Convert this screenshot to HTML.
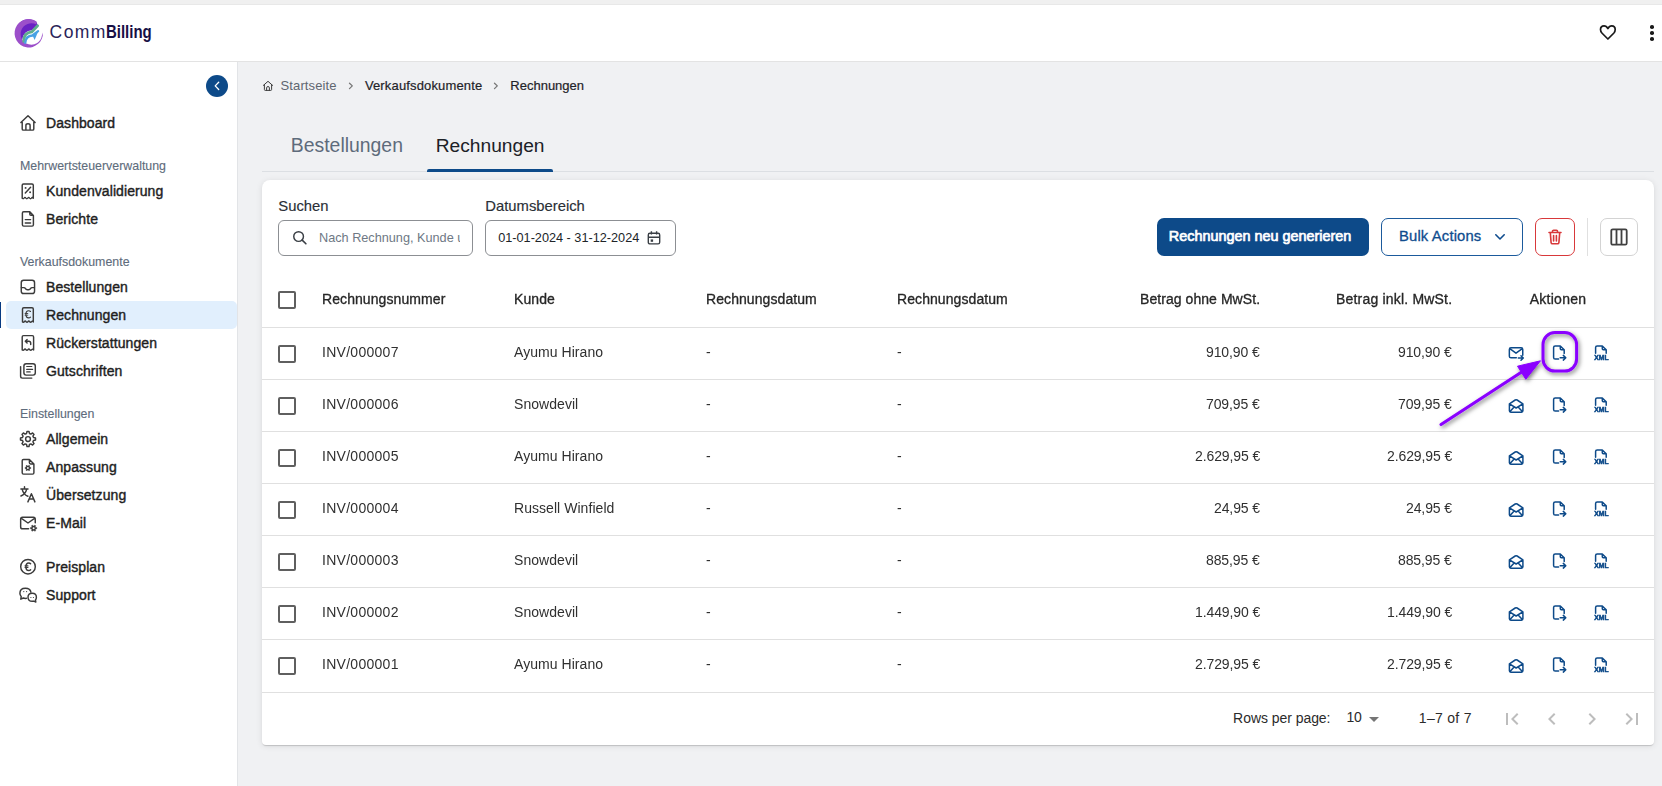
<!DOCTYPE html>
<html><head><meta charset="utf-8"><style>
html,body{margin:0;padding:0;}
body{width:1662px;height:786px;position:relative;overflow:hidden;background:#f0f1f3;font-family:"Liberation Sans", sans-serif;}
.t{position:absolute;white-space:nowrap;}
svg{overflow:visible;}
</style></head><body>
<div style="position:absolute;left:0px;top:0px;width:1662px;height:4px;background:#f0f0f0;"></div>
<div style="position:absolute;left:0px;top:4px;width:1662px;height:1px;background:#e8e8e8;"></div>
<div style="position:absolute;left:0px;top:5px;width:1662px;height:56px;background:#fff;"></div>
<div style="position:absolute;left:0px;top:61px;width:1662px;height:1px;background:#e3e3e3;"></div>
<div style="position:absolute;left:0px;top:62px;width:237px;height:724px;background:#fff;"></div>
<div style="position:absolute;left:237px;top:62px;width:1px;height:724px;background:#e2e4e7;"></div>
<svg style="position:absolute;left:12.3px;top:17.7px;" width="34" height="32" viewBox="0 0 34 32">
<path d="M 6.5 21 A 12.3 12.3 0 0 1 24.7 4.6 L 25.8 7.2 L 19.8 12.3 Q 11.8 12.6 10.3 21.5 Z" fill="#6a22c4"/>
<path d="M 24.6 3.4 A 14.2 14.2 0 1 0 30.95 14.6 L 29.9 17.6 A 10.7 10.7 0 1 1 24.4 6.6 Z" fill="#9c4fca"/>
<path d="M 11.7 23.4 Q 11.7 14.6 19.8 13.9 L 25.6 7.8" stroke="#5fae8e" stroke-width="2.8" fill="none" stroke-linecap="round"/>
<path d="M 13.3 24.8 Q 13.7 17.8 20.4 17.5 L 26.1 13.2" stroke="#48a2e4" stroke-width="2.3" fill="none" stroke-linecap="round"/>
<path d="M 26.6 12.4 L 22.6 22 L 20.6 17.4 Z" fill="#48a2e4"/>
</svg>
<div class="t" style="font-size:17.5px;line-height:17.5px;color:#2a2358;font-weight:normal;top:24.49px;letter-spacing:1.4px;left:49.6px;">Comm</div>
<div class="t" style="font-size:17.5px;line-height:17.5px;color:#170f45;font-weight:bold;top:24.49px;left:106.2px;"><span style="display:inline-block;transform:scaleX(0.855);transform-origin:0 0;">Billing</span></div>
<svg style="position:absolute;left:0;top:0;" width="1662" height="62" viewBox="0 0 1662 62"><path d="M 1607.9 39 L 1601.9 33 Q 1600.5 31.6 1600.5 29.6 Q 1600.5 25.8 1604.1 25.8 Q 1606.4 25.8 1607.9 28.6 Q 1609.4 25.8 1611.7 25.8 Q 1615.2 25.8 1615.2 29.6 Q 1615.2 31.6 1613.9 33 Z" stroke="#1a1a1a" stroke-width="1.7" fill="none" stroke-linejoin="round"/></svg>
<div style="position:absolute;left:1650.2px;top:25.4px;width:3.6px;height:3.6px;border-radius:50%;background:#1a1a1a"></div>
<div style="position:absolute;left:1650.2px;top:31.099999999999998px;width:3.6px;height:3.6px;border-radius:50%;background:#1a1a1a"></div>
<div style="position:absolute;left:1650.2px;top:37.0px;width:3.6px;height:3.6px;border-radius:50%;background:#1a1a1a"></div>
<div style="position:absolute;left:206px;top:75px;width:22px;height:22px;border-radius:50%;background:#0d4a89"></div>
<svg style="position:absolute;left:213px;top:80px;" width="8" height="12" viewBox="0 0 8 12"><path d="M5.7 2.3 L2.2 5.9 L5.7 9.5" stroke="#fff" stroke-width="1.35" fill="none" stroke-linecap="round" stroke-linejoin="round"/></svg>
<div style="position:absolute;left:6px;top:301px;width:230.5px;height:28px;border-radius:5px;background:#e1effd"></div>
<div style="position:absolute;left:0px;top:302px;width:1px;height:26px;background:#083a82;"></div>
<div class="t" style="font-size:14px;line-height:14px;color:#1e1e1e;font-weight:normal;top:116.15px;-webkit-text-stroke:0.4px #1e1e1e;letter-spacing:0.08px;left:46px;">Dashboard</div>
<div class="t" style="font-size:14px;line-height:14px;color:#1e1e1e;font-weight:normal;top:184.15px;-webkit-text-stroke:0.4px #1e1e1e;letter-spacing:0.08px;left:46px;">Kundenvalidierung</div>
<div class="t" style="font-size:14px;line-height:14px;color:#1e1e1e;font-weight:normal;top:212.15px;-webkit-text-stroke:0.4px #1e1e1e;letter-spacing:0.08px;left:46px;">Berichte</div>
<div class="t" style="font-size:14px;line-height:14px;color:#1e1e1e;font-weight:normal;top:279.65px;-webkit-text-stroke:0.4px #1e1e1e;letter-spacing:0.08px;left:46px;">Bestellungen</div>
<div class="t" style="font-size:14px;line-height:14px;color:#1e1e1e;font-weight:normal;top:307.65px;-webkit-text-stroke:0.4px #1e1e1e;letter-spacing:0.08px;left:46px;">Rechnungen</div>
<div class="t" style="font-size:14px;line-height:14px;color:#1e1e1e;font-weight:normal;top:335.65px;-webkit-text-stroke:0.4px #1e1e1e;letter-spacing:0.08px;left:46px;">Rückerstattungen</div>
<div class="t" style="font-size:14px;line-height:14px;color:#1e1e1e;font-weight:normal;top:363.65px;-webkit-text-stroke:0.4px #1e1e1e;letter-spacing:0.08px;left:46px;">Gutschriften</div>
<div class="t" style="font-size:14px;line-height:14px;color:#1e1e1e;font-weight:normal;top:431.85px;-webkit-text-stroke:0.4px #1e1e1e;letter-spacing:0.08px;left:46px;">Allgemein</div>
<div class="t" style="font-size:14px;line-height:14px;color:#1e1e1e;font-weight:normal;top:459.85px;-webkit-text-stroke:0.4px #1e1e1e;letter-spacing:0.08px;left:46px;">Anpassung</div>
<div class="t" style="font-size:14px;line-height:14px;color:#1e1e1e;font-weight:normal;top:487.85px;-webkit-text-stroke:0.4px #1e1e1e;letter-spacing:0.08px;left:46px;">Übersetzung</div>
<div class="t" style="font-size:14px;line-height:14px;color:#1e1e1e;font-weight:normal;top:515.85px;-webkit-text-stroke:0.4px #1e1e1e;letter-spacing:0.08px;left:46px;">E-Mail</div>
<div class="t" style="font-size:14px;line-height:14px;color:#1e1e1e;font-weight:normal;top:559.85px;-webkit-text-stroke:0.4px #1e1e1e;letter-spacing:0.08px;left:46px;">Preisplan</div>
<div class="t" style="font-size:14px;line-height:14px;color:#1e1e1e;font-weight:normal;top:587.85px;-webkit-text-stroke:0.4px #1e1e1e;letter-spacing:0.08px;left:46px;">Support</div>
<div class="t" style="font-size:12.4px;line-height:12.4px;color:#5e6c7c;font-weight:normal;top:159.50px;-webkit-text-stroke:0.12px #5e6c7c;left:20px;">Mehrwertsteuerverwaltung</div>
<div class="t" style="font-size:12.4px;line-height:12.4px;color:#5e6c7c;font-weight:normal;top:256.00px;-webkit-text-stroke:0.12px #5e6c7c;left:20px;">Verkaufsdokumente</div>
<div class="t" style="font-size:12.4px;line-height:12.4px;color:#5e6c7c;font-weight:normal;top:407.50px;-webkit-text-stroke:0.12px #5e6c7c;left:20px;">Einstellungen</div>
<div class="t" style="font-size:13px;line-height:13px;color:#5f6670;font-weight:normal;top:79.00px;letter-spacing:0.1px;left:280.6px;">Startseite</div>
<div class="t" style="font-size:13px;line-height:13px;color:#1f2328;font-weight:normal;top:79.00px;-webkit-text-stroke:0.2px #1f2328;letter-spacing:0.15px;left:364.9px;">Verkaufsdokumente</div>
<div class="t" style="font-size:13px;line-height:13px;color:#1f2328;font-weight:normal;top:79.00px;-webkit-text-stroke:0.2px #1f2328;left:510.3px;">Rechnungen</div>
<div class="t" style="font-size:19.4px;line-height:19.4px;color:#5e6b7b;font-weight:normal;top:135.58px;left:290.8px;">Bestellungen</div>
<div class="t" style="font-size:19.2px;line-height:19.2px;color:#1c2127;font-weight:normal;top:135.75px;left:435.7px;">Rechnungen</div>
<div style="position:absolute;left:262px;top:171px;width:1392px;height:1px;background:#dcdfe3;"></div>
<div style="position:absolute;left:427px;top:168.6px;width:126px;height:3.200000000000017px;background:#0d4a89;border-radius:2px 2px 0 0;"></div>
<div style="position:absolute;left:262px;top:180px;width:1392px;height:565px;background:#fff;border-radius:8px 8px 4px 4px;box-shadow:0px 2px 1px -1px rgba(0,0,0,0.1),0px 1px 1px 0px rgba(0,0,0,0.06),0px 1px 6px 0px rgba(0,0,0,0.1);"></div>
<div class="t" style="font-size:14.8px;line-height:14.8px;color:#2a2f36;font-weight:normal;top:198.77px;-webkit-text-stroke:0.15px #2a2f36;left:278.3px;">Suchen</div>
<div class="t" style="font-size:14.8px;line-height:14.8px;color:#2a2f36;font-weight:normal;top:198.77px;-webkit-text-stroke:0.15px #2a2f36;left:485.3px;">Datumsbereich</div>
<div style="position:absolute;left:278px;top:220px;width:193px;height:34px;border:1px solid #8c8f93;border-radius:6px;"></div>
<div style="position:absolute;left:485px;top:220px;width:189px;height:34px;border:1px solid #8c8f93;border-radius:6px;"></div>
<svg style="position:absolute;left:292px;top:230px;" width="15" height="15" viewBox="0 0 15 15"><circle cx="6.6" cy="6.5" r="4.85" stroke="#3a3f45" stroke-width="1.45" fill="none"/><path d="M10.2 10.1 L13.9 13.8" stroke="#3a3f45" stroke-width="1.6" stroke-linecap="round"/></svg>
<div style="position:absolute;left:319px;top:228px;width:140.7px;height:20px;overflow:hidden;"><div class="t" style="left:0;top:3.70px;font-size:12.7px;line-height:13px;color:#6e7884;">Nach Rechnung, Kunde und mehr</div></div>
<div class="t" style="font-size:12.7px;line-height:12.7px;color:#202428;font-weight:normal;top:231.85px;left:498.2px;">01-01-2024 - 31-12-2024</div>
<svg style="position:absolute;left:647px;top:230px;" width="14" height="15" viewBox="0 0 14 15"><rect x="1.3" y="3.3" width="11.4" height="10.6" rx="1.6" stroke="#3a3f45" stroke-width="1.4" fill="none"/><path d="M1.3 7.3 H12.7 M4.4 1.2 V4.6 M9.6 1.2 V4.6" stroke="#3a3f45" stroke-width="1.4"/><rect x="3.7" y="9.4" width="2.4" height="2.4" fill="#3a3f45"/></svg>
<div style="position:absolute;left:1157px;top:218px;width:212px;height:38px;border-radius:7px;background:#0d4a89;"></div>
<div class="t" style="font-size:14.4px;line-height:14.4px;color:#fff;font-weight:normal;top:229.11px;-webkit-text-stroke:0.7px #fff;left:1168.8px;">Rechnungen neu generieren</div>
<div style="position:absolute;left:1381px;top:218px;width:140px;height:36px;border:1px solid #1b5a9c;border-radius:7px;"></div>
<div class="t" style="font-size:14.8px;line-height:14.8px;color:#0f4c8e;font-weight:normal;top:228.67px;-webkit-text-stroke:0.3px #0f4c8e;letter-spacing:0.15px;left:1399px;">Bulk Actions</div>
<svg style="position:absolute;left:1494px;top:233px;" width="12" height="8" viewBox="0 0 12 8"><path d="M1.8 1.8 L6 6 L10.2 1.8" stroke="#0f4c8e" stroke-width="1.6" fill="none" stroke-linecap="round" stroke-linejoin="round"/></svg>
<div style="position:absolute;left:1535px;top:218px;width:38px;height:36px;border:1px solid #d8383a;border-radius:7px;"></div>
<svg style="position:absolute;left:1547px;top:229px;" width="16" height="16" viewBox="0 0 16 16"><path d="M2 3.5 H14 M5.5 3.5 V2.2 C5.5 1.6 6 1.2 6.5 1.2 H9.5 C10 1.2 10.5 1.6 10.5 2.2 V3.5 M3.3 3.8 L4.1 13.6 C4.2 14.3 4.7 14.8 5.4 14.8 H10.6 C11.3 14.8 11.8 14.3 11.9 13.6 L12.7 3.8 M6.6 6.5 V12 M9.4 6.5 V12" stroke="#d8383a" stroke-width="1.6" fill="none" stroke-linecap="round" stroke-linejoin="round"/></svg>
<div style="position:absolute;left:1587px;top:218px;width:1px;height:38px;background:#e0e0e0;"></div>
<div style="position:absolute;left:1600px;top:218px;width:36px;height:36px;border:1px solid #d3d3d3;border-radius:7px;"></div>
<svg style="position:absolute;left:1610px;top:228px;" width="18" height="18" viewBox="0 0 18 18"><rect x="1.3" y="1.3" width="15.4" height="15.4" rx="1.5" stroke="#404040" stroke-width="1.8" fill="none"/><path d="M6.5 1.3 V16.7 M11.5 1.3 V16.7" stroke="#404040" stroke-width="1.8"/></svg>
<div style="position:absolute;left:278.2px;top:291.2px;width:13.5px;height:13.5px;border:2px solid #5f5f5f;border-radius:2px;"></div>
<div class="t" style="font-size:14px;line-height:14px;color:#262626;font-weight:normal;top:292.15px;-webkit-text-stroke:0.32px #262626;letter-spacing:0.08px;left:322.4px;will-change:transform;">Rechnungsnummer</div>
<div class="t" style="font-size:14px;line-height:14px;color:#262626;font-weight:normal;top:292.15px;-webkit-text-stroke:0.32px #262626;letter-spacing:0.08px;left:514px;will-change:transform;">Kunde</div>
<div class="t" style="font-size:14px;line-height:14px;color:#262626;font-weight:normal;top:292.15px;-webkit-text-stroke:0.32px #262626;letter-spacing:0.08px;left:706px;will-change:transform;">Rechnungsdatum</div>
<div class="t" style="font-size:14px;line-height:14px;color:#262626;font-weight:normal;top:292.15px;-webkit-text-stroke:0.32px #262626;letter-spacing:0.08px;left:897.2px;will-change:transform;">Rechnungsdatum</div>
<div class="t" style="font-size:14px;line-height:14px;color:#262626;font-weight:normal;top:292.15px;-webkit-text-stroke:0.32px #262626;letter-spacing:0.06px;right:402px;will-change:transform;">Betrag ohne MwSt.</div>
<div class="t" style="font-size:14px;line-height:14px;color:#262626;font-weight:normal;top:292.15px;-webkit-text-stroke:0.32px #262626;letter-spacing:0.19px;right:210px;will-change:transform;">Betrag inkl. MwSt.</div>
<div class="t" style="font-size:14px;line-height:14px;color:#262626;font-weight:normal;top:292.15px;-webkit-text-stroke:0.32px #262626;letter-spacing:0.26px;left:1258.3px;width:600px;text-align:center;will-change:transform;">Aktionen</div>
<div style="position:absolute;left:262px;top:327px;width:1392px;height:1px;background:#e0e0e0;"></div>
<div style="position:absolute;left:278.2px;top:345.1px;width:13.5px;height:13.5px;border:2px solid #5f5f5f;border-radius:2px;"></div>
<div class="t" style="font-size:14px;line-height:14px;color:#303030;font-weight:normal;top:344.85px;letter-spacing:0.28px;left:322.4px;will-change:transform;">INV/000007</div>
<div class="t" style="font-size:14px;line-height:14px;color:#303030;font-weight:normal;top:344.85px;letter-spacing:0.05px;left:514px;will-change:transform;">Ayumu Hirano</div>
<div class="t" style="font-size:14px;line-height:14px;color:#303030;font-weight:normal;top:344.85px;left:706px;will-change:transform;">-</div>
<div class="t" style="font-size:14px;line-height:14px;color:#303030;font-weight:normal;top:344.85px;left:897.2px;will-change:transform;">-</div>
<div class="t" style="font-size:14px;line-height:14px;color:#303030;font-weight:normal;top:344.85px;letter-spacing:-0.1px;right:402px;will-change:transform;">910,90 €</div>
<div class="t" style="font-size:14px;line-height:14px;color:#303030;font-weight:normal;top:344.85px;letter-spacing:-0.1px;right:210px;will-change:transform;">910,90 €</div>
<div style="position:absolute;left:262px;top:379px;width:1392px;height:1px;background:#e0e0e0;"></div>
<div style="position:absolute;left:278.2px;top:397.1px;width:13.5px;height:13.5px;border:2px solid #5f5f5f;border-radius:2px;"></div>
<div class="t" style="font-size:14px;line-height:14px;color:#303030;font-weight:normal;top:396.85px;letter-spacing:0.28px;left:322.4px;will-change:transform;">INV/000006</div>
<div class="t" style="font-size:14px;line-height:14px;color:#303030;font-weight:normal;top:396.85px;letter-spacing:0.05px;left:514px;will-change:transform;">Snowdevil</div>
<div class="t" style="font-size:14px;line-height:14px;color:#303030;font-weight:normal;top:396.85px;left:706px;will-change:transform;">-</div>
<div class="t" style="font-size:14px;line-height:14px;color:#303030;font-weight:normal;top:396.85px;left:897.2px;will-change:transform;">-</div>
<div class="t" style="font-size:14px;line-height:14px;color:#303030;font-weight:normal;top:396.85px;letter-spacing:-0.1px;right:402px;will-change:transform;">709,95 €</div>
<div class="t" style="font-size:14px;line-height:14px;color:#303030;font-weight:normal;top:396.85px;letter-spacing:-0.1px;right:210px;will-change:transform;">709,95 €</div>
<div style="position:absolute;left:262px;top:431px;width:1392px;height:1px;background:#e0e0e0;"></div>
<div style="position:absolute;left:278.2px;top:449.1px;width:13.5px;height:13.5px;border:2px solid #5f5f5f;border-radius:2px;"></div>
<div class="t" style="font-size:14px;line-height:14px;color:#303030;font-weight:normal;top:448.85px;letter-spacing:0.28px;left:322.4px;will-change:transform;">INV/000005</div>
<div class="t" style="font-size:14px;line-height:14px;color:#303030;font-weight:normal;top:448.85px;letter-spacing:0.05px;left:514px;will-change:transform;">Ayumu Hirano</div>
<div class="t" style="font-size:14px;line-height:14px;color:#303030;font-weight:normal;top:448.85px;left:706px;will-change:transform;">-</div>
<div class="t" style="font-size:14px;line-height:14px;color:#303030;font-weight:normal;top:448.85px;left:897.2px;will-change:transform;">-</div>
<div class="t" style="font-size:14px;line-height:14px;color:#303030;font-weight:normal;top:448.85px;letter-spacing:-0.1px;right:402px;will-change:transform;">2.629,95 €</div>
<div class="t" style="font-size:14px;line-height:14px;color:#303030;font-weight:normal;top:448.85px;letter-spacing:-0.1px;right:210px;will-change:transform;">2.629,95 €</div>
<div style="position:absolute;left:262px;top:483px;width:1392px;height:1px;background:#e0e0e0;"></div>
<div style="position:absolute;left:278.2px;top:501.1px;width:13.5px;height:13.5px;border:2px solid #5f5f5f;border-radius:2px;"></div>
<div class="t" style="font-size:14px;line-height:14px;color:#303030;font-weight:normal;top:500.85px;letter-spacing:0.28px;left:322.4px;will-change:transform;">INV/000004</div>
<div class="t" style="font-size:14px;line-height:14px;color:#303030;font-weight:normal;top:500.85px;letter-spacing:0.05px;left:514px;will-change:transform;">Russell Winfield</div>
<div class="t" style="font-size:14px;line-height:14px;color:#303030;font-weight:normal;top:500.85px;left:706px;will-change:transform;">-</div>
<div class="t" style="font-size:14px;line-height:14px;color:#303030;font-weight:normal;top:500.85px;left:897.2px;will-change:transform;">-</div>
<div class="t" style="font-size:14px;line-height:14px;color:#303030;font-weight:normal;top:500.85px;letter-spacing:-0.1px;right:402px;will-change:transform;">24,95 €</div>
<div class="t" style="font-size:14px;line-height:14px;color:#303030;font-weight:normal;top:500.85px;letter-spacing:-0.1px;right:210px;will-change:transform;">24,95 €</div>
<div style="position:absolute;left:262px;top:535px;width:1392px;height:1px;background:#e0e0e0;"></div>
<div style="position:absolute;left:278.2px;top:553.1px;width:13.5px;height:13.5px;border:2px solid #5f5f5f;border-radius:2px;"></div>
<div class="t" style="font-size:14px;line-height:14px;color:#303030;font-weight:normal;top:552.85px;letter-spacing:0.28px;left:322.4px;will-change:transform;">INV/000003</div>
<div class="t" style="font-size:14px;line-height:14px;color:#303030;font-weight:normal;top:552.85px;letter-spacing:0.05px;left:514px;will-change:transform;">Snowdevil</div>
<div class="t" style="font-size:14px;line-height:14px;color:#303030;font-weight:normal;top:552.85px;left:706px;will-change:transform;">-</div>
<div class="t" style="font-size:14px;line-height:14px;color:#303030;font-weight:normal;top:552.85px;left:897.2px;will-change:transform;">-</div>
<div class="t" style="font-size:14px;line-height:14px;color:#303030;font-weight:normal;top:552.85px;letter-spacing:-0.1px;right:402px;will-change:transform;">885,95 €</div>
<div class="t" style="font-size:14px;line-height:14px;color:#303030;font-weight:normal;top:552.85px;letter-spacing:-0.1px;right:210px;will-change:transform;">885,95 €</div>
<div style="position:absolute;left:262px;top:587px;width:1392px;height:1px;background:#e0e0e0;"></div>
<div style="position:absolute;left:278.2px;top:605.1px;width:13.5px;height:13.5px;border:2px solid #5f5f5f;border-radius:2px;"></div>
<div class="t" style="font-size:14px;line-height:14px;color:#303030;font-weight:normal;top:604.85px;letter-spacing:0.28px;left:322.4px;will-change:transform;">INV/000002</div>
<div class="t" style="font-size:14px;line-height:14px;color:#303030;font-weight:normal;top:604.85px;letter-spacing:0.05px;left:514px;will-change:transform;">Snowdevil</div>
<div class="t" style="font-size:14px;line-height:14px;color:#303030;font-weight:normal;top:604.85px;left:706px;will-change:transform;">-</div>
<div class="t" style="font-size:14px;line-height:14px;color:#303030;font-weight:normal;top:604.85px;left:897.2px;will-change:transform;">-</div>
<div class="t" style="font-size:14px;line-height:14px;color:#303030;font-weight:normal;top:604.85px;letter-spacing:-0.1px;right:402px;will-change:transform;">1.449,90 €</div>
<div class="t" style="font-size:14px;line-height:14px;color:#303030;font-weight:normal;top:604.85px;letter-spacing:-0.1px;right:210px;will-change:transform;">1.449,90 €</div>
<div style="position:absolute;left:262px;top:639px;width:1392px;height:1px;background:#e0e0e0;"></div>
<div style="position:absolute;left:278.2px;top:657.1px;width:13.5px;height:13.5px;border:2px solid #5f5f5f;border-radius:2px;"></div>
<div class="t" style="font-size:14px;line-height:14px;color:#303030;font-weight:normal;top:656.85px;letter-spacing:0.28px;left:322.4px;will-change:transform;">INV/000001</div>
<div class="t" style="font-size:14px;line-height:14px;color:#303030;font-weight:normal;top:656.85px;letter-spacing:0.05px;left:514px;will-change:transform;">Ayumu Hirano</div>
<div class="t" style="font-size:14px;line-height:14px;color:#303030;font-weight:normal;top:656.85px;left:706px;will-change:transform;">-</div>
<div class="t" style="font-size:14px;line-height:14px;color:#303030;font-weight:normal;top:656.85px;left:897.2px;will-change:transform;">-</div>
<div class="t" style="font-size:14px;line-height:14px;color:#303030;font-weight:normal;top:656.85px;letter-spacing:-0.1px;right:402px;will-change:transform;">2.729,95 €</div>
<div class="t" style="font-size:14px;line-height:14px;color:#303030;font-weight:normal;top:656.85px;letter-spacing:-0.1px;right:210px;will-change:transform;">2.729,95 €</div>
<div style="position:absolute;left:262px;top:692px;width:1392px;height:1px;background:#e0e0e0;"></div>
<div class="t" style="font-size:14px;line-height:14px;color:#2b2b2b;font-weight:normal;top:710.55px;letter-spacing:-0.05px;left:1233.1px;">Rows per page:</div>
<div class="t" style="font-size:14px;line-height:14px;color:#2b2b2b;font-weight:normal;top:710.15px;letter-spacing:-0.3px;left:1346.5px;">10</div>
<svg style="position:absolute;left:1369px;top:716.8px;" width="10" height="5" viewBox="0 0 10 5"><path d="M0 0 H10 L5 5Z" fill="#757575"/></svg>
<div class="t" style="font-size:14px;line-height:14px;color:#2b2b2b;font-weight:normal;top:710.55px;letter-spacing:0.3px;left:1418.8px;">1–7 of 7</div>
<svg style="position:absolute;left:1500px;top:707px;" width="24" height="24" viewBox="0 0 24 24"><path d="M18.41 16.59L13.82 12l4.59-4.59L17 6l-6 6 6 6zM6 6h2v12H6z" fill="#bdbdbd"/></svg>
<svg style="position:absolute;left:1540px;top:707px;" width="24" height="24" viewBox="0 0 24 24"><path d="M15.41 7.41L14 6l-6 6 6 6 1.41-1.41L10.83 12z" fill="#bdbdbd"/></svg>
<svg style="position:absolute;left:1580px;top:707px;" width="24" height="24" viewBox="0 0 24 24"><path d="M10 6L8.59 7.41 13.17 12l-4.58 4.59L10 18l6-6z" fill="#bdbdbd"/></svg>
<svg style="position:absolute;left:1620px;top:707px;" width="24" height="24" viewBox="0 0 24 24"><path d="M5.59 7.41L10.18 12l-4.59 4.59L7 18l6-6-6-6zM16 6h2v12h-2z" fill="#bdbdbd"/></svg>
<svg style="position:absolute;left:0;top:0;" width="240" height="786" viewBox="0 0 240 786"><path d="M 20.9 122.6 L 28 115.8 L 35.1 122.6 M 22.2 121.2 V 128.9 Q 22.2 130.1 23.4 130.1 H 32.6 Q 33.8 130.1 33.8 128.9 V 121.2 M 25.9 130.1 V 125.4 Q 25.9 123.7 28 123.7 Q 30.1 123.7 30.1 125.4 V 130.1" stroke="#3b3b3b" stroke-width="1.45" fill="none" stroke-linecap="round" stroke-linejoin="round"/><path d="M 22.2 198.3 V 185.3 Q 22.2 184 23.5 184 H 32 Q 33.3 184 33.3 185.3 V 198.3 Q 32.38 196.70 31.45 198.10 Q 30.52 199.20 29.60 198.10 Q 28.67 196.70 27.75 198.10 Q 26.82 199.20 25.90 198.10 Q 24.97 196.70 24.05 198.10 Q 23.12 199.20 22.20 198.10" stroke="#3b3b3b" stroke-width="1.45" fill="none" stroke-linecap="round" stroke-linejoin="round"/><path d="M 25.3 192.9 L 30.6 187.2" stroke="#3b3b3b" stroke-width="1.45" fill="none" stroke-linecap="round" stroke-linejoin="round"/><circle cx="25.6" cy="187.9" r="0.95" fill="#3b3b3b"/><circle cx="30.1" cy="192.2" r="0.95" fill="#3b3b3b"/><path d="M 29.8 211.8 H 23.7 Q 22.4 211.8 22.4 213.1 V 224.8 Q 22.4 226.1 23.7 226.1 H 32.1 Q 33.4 226.1 33.4 224.8 V 215.4 Z M 29.8 212 V 214.2 Q 29.8 215.3 30.9 215.3 H 33.2 M 25.3 219.6 H 30.6 M 25.3 222.9 H 30.6" stroke="#3b3b3b" stroke-width="1.45" fill="none" stroke-linecap="round" stroke-linejoin="round"/><rect x="21.25" y="280.25" width="13.3" height="13.3" rx="2.4" stroke="#3b3b3b" stroke-width="1.45" fill="none" stroke-linecap="round" stroke-linejoin="round"/><path d="M 21.4 287.6 H 23.9 Q 24.9 287.6 25.5 288.7 Q 26.1 289.8 27.3 289.8 H 28.7 Q 29.9 289.8 30.5 288.7 Q 31.1 287.6 32.1 287.6 H 34.4" stroke="#3b3b3b" stroke-width="1.45" fill="none" stroke-linecap="round" stroke-linejoin="round"/><path d="M 22.5 322 V 309 Q 22.5 307.7 23.8 307.7 H 32 Q 33.3 307.7 33.3 309 V 322 Q 32.40 320.40 31.50 321.80 Q 30.60 322.90 29.70 321.80 Q 28.80 320.40 27.90 321.80 Q 27.00 322.90 26.10 321.80 Q 25.20 320.40 24.30 321.80 Q 23.40 322.90 22.50 321.80" stroke="#3b3b3b" stroke-width="1.45" fill="none" stroke-linecap="round" stroke-linejoin="round"/><path d="M 30.5 311.5 Q 29.8 310.7 28.7 310.7 Q 25.9 310.7 25.9 314.3 Q 25.9 317.9 28.7 317.9 Q 29.8 317.9 30.5 317.1" stroke="#3b3b3b" stroke-width="1.15" fill="none" stroke-linecap="round"/><path d="M 24.7 313.5 H 28.2 M 24.7 315.2 H 28.2" stroke="#3b3b3b" stroke-width="0.9" fill="none"/><path d="M 22.2 350 V 336.9 Q 22.2 335.6 23.5 335.6 H 32.3 Q 33.6 335.6 33.6 336.9 V 350 Q 32.65 348.40 31.70 349.80 Q 30.75 350.90 29.80 349.80 Q 28.85 348.40 27.90 349.80 Q 26.95 350.90 26.00 349.80 Q 25.05 348.40 24.10 349.80 Q 23.15 350.90 22.20 349.80" stroke="#3b3b3b" stroke-width="1.45" fill="none" stroke-linecap="round" stroke-linejoin="round"/><path d="M 25.4 341.3 H 28.8 Q 30.7 341.3 30.7 343.3 V 344.6 M 27.1 339.5 L 25.3 341.3 L 27.1 343.1" stroke="#3b3b3b" stroke-width="1.45" fill="none" stroke-linecap="round" stroke-linejoin="round"/><rect x="23.9" y="363.7" width="11.4" height="11.4" rx="2.3" stroke="#3b3b3b" stroke-width="1.45" fill="none" stroke-linecap="round" stroke-linejoin="round"/><path d="M 20.6 366.6 V 376.3 Q 20.6 378.1 22.4 378.1 H 31.8" stroke="#3b3b3b" stroke-width="1.45" fill="none" stroke-linecap="round" stroke-linejoin="round"/><path d="M 26.7 366.5 H 31.8 M 26.7 369.4 H 32.6 M 26.7 371.9 H 30.2" stroke="#3b3b3b" stroke-width="1.2" fill="none" stroke-linecap="round"/><path d="M 33.52 437.58 L 35.53 437.99 L 35.53 440.01 L 33.52 440.42 L 32.91 441.90 L 34.04 443.61 L 32.61 445.04 L 30.90 443.91 L 29.42 444.52 L 29.01 446.53 L 26.99 446.53 L 26.58 444.52 L 25.10 443.91 L 23.39 445.04 L 21.96 443.61 L 23.09 441.90 L 22.48 440.42 L 20.47 440.01 L 20.47 437.99 L 22.48 437.58 L 23.09 436.10 L 21.96 434.39 L 23.39 432.96 L 25.10 434.09 L 26.58 433.48 L 26.99 431.47 L 29.01 431.47 L 29.42 433.48 L 30.90 434.09 L 32.61 432.96 L 34.04 434.39 L 32.91 436.10 Z" stroke="#3b3b3b" stroke-width="1.45" fill="none" stroke-linecap="round" stroke-linejoin="round"/><circle cx="28" cy="439" r="2.4" stroke="#3b3b3b" stroke-width="1.45" fill="none" stroke-linecap="round" stroke-linejoin="round"/><path d="M 29.4 459.4 H 23.5 Q 22.2 459.4 22.2 460.7 V 472.8 Q 22.2 474.1 23.5 474.1 H 32.6 Q 33.9 474.1 33.9 472.8 V 463.9 Z M 29.4 459.6 V 462.8 Q 29.4 463.9 30.5 463.9 H 33.7" stroke="#3b3b3b" stroke-width="1.45" fill="none" stroke-linecap="round" stroke-linejoin="round"/><path d="M 29.88 467.31 L 30.75 467.49 L 30.75 468.51 L 29.88 468.69 L 29.49 469.37 L 29.77 470.22 L 28.88 470.73 L 28.29 470.06 L 27.51 470.06 L 26.92 470.73 L 26.03 470.22 L 26.31 469.37 L 25.92 468.69 L 25.05 468.51 L 25.05 467.49 L 25.92 467.31 L 26.31 466.63 L 26.03 465.78 L 26.92 465.27 L 27.51 465.94 L 28.29 465.94 L 28.88 465.27 L 29.77 465.78 L 29.49 466.63 Z" fill="#3b3b3b" stroke="#3b3b3b" stroke-width="0.5"/><circle cx="27.9" cy="468" r="0.9" fill="#fff"/><path d="M 20.9 489 H 28 M 24.5 486.8 V 489 M 22.2 489.3 Q 23.4 494.5 27.9 496.2 M 26.6 489.3 Q 25.6 494 20.9 496" stroke="#3b3b3b" stroke-width="1.45" fill="none" stroke-linecap="round" stroke-linejoin="round"/><path d="M 27.9 501.9 L 31.4 493.7 L 34.9 501.9 M 29.2 499 H 33.6" stroke="#3b3b3b" stroke-width="1.45" fill="none" stroke-linecap="round" stroke-linejoin="round"/><path d="M 28.6 528.75 H 22.5 Q 20.65 528.75 20.65 526.9 V 519 Q 20.65 517.15 22.5 517.15 H 33.4 Q 35.25 517.15 35.25 519 V 522.8 M 21.1 518.2 L 28 523 L 34.9 518.2" stroke="#3b3b3b" stroke-width="1.45" fill="none" stroke-linecap="round" stroke-linejoin="round"/><path d="M 35.77 527.44 L 36.85 527.62 L 36.85 528.78 L 35.77 528.96 L 35.34 529.70 L 35.73 530.72 L 34.72 531.30 L 34.03 530.46 L 33.17 530.46 L 32.48 531.30 L 31.47 530.72 L 31.86 529.70 L 31.43 528.96 L 30.35 528.78 L 30.35 527.62 L 31.43 527.44 L 31.86 526.70 L 31.47 525.68 L 32.48 525.10 L 33.17 525.94 L 34.03 525.94 L 34.72 525.10 L 35.73 525.68 L 35.34 526.70 Z" fill="#3b3b3b" stroke="#3b3b3b" stroke-width="0.4"/><circle cx="33.6" cy="528.2" r="1.0" fill="#fff"/><circle cx="28" cy="566.7" r="7.3" stroke="#3b3b3b" stroke-width="1.45" fill="none" stroke-linecap="round" stroke-linejoin="round"/><path d="M 30.6 563.7 Q 29.9 562.9 28.8 562.9 Q 25.9 562.9 25.9 566.7 Q 25.9 570.5 28.8 570.5 Q 29.9 570.5 30.6 569.7" stroke="#3b3b3b" stroke-width="1.45" fill="none" stroke-linecap="round" stroke-linejoin="round"/><path d="M 24.6 565.9 H 28.4 M 24.6 567.5 H 28.4" stroke="#3b3b3b" stroke-width="1.1" fill="none"/><path d="M 26.4 598.3 Q 25.9 598.4 25.4 598.4 Q 24.3 598.4 23.3 598 L 20.8 599.2 L 21.2 596.6 Q 19.9 595.3 19.9 593.3 Q 19.9 588.2 25.4 588.2 Q 30.3 588.2 30.9 592.2" stroke="#3b3b3b" stroke-width="1.45" fill="none" stroke-linecap="round" stroke-linejoin="round"/><path d="M 32.2 593.2 Q 36.4 593.2 36.4 597.2 Q 36.4 598.9 35.5 600 L 35.8 602 L 33.9 601.1 Q 33.1 601.3 32.2 601.3 Q 28 601.3 28 597.2 Q 28 593.2 32.2 593.2 Z" stroke="#3b3b3b" stroke-width="1.45" fill="none" stroke-linecap="round" stroke-linejoin="round"/><circle cx="23.8" cy="591.6" r="0.6" fill="#3b3b3b"/><circle cx="26.6" cy="591.6" r="0.6" fill="#3b3b3b"/><circle cx="30.9" cy="597.5" r="0.6" fill="#3b3b3b"/><circle cx="33.4" cy="597.5" r="0.6" fill="#3b3b3b"/></svg>
<svg style="position:absolute;left:0;top:0;" width="1662" height="120" viewBox="0 0 1662 120"><path d="M 263.4 85.4 L 268 81.3 L 272.6 85.4 M 264.4 84.6 V 89.6 Q 264.4 90.4 265.2 90.4 H 270.8 Q 271.6 90.4 271.6 89.6 V 84.6 M 266.6 90.4 V 87.8 Q 266.6 86.6 268 86.6 Q 269.4 86.6 269.4 87.8 V 90.4" stroke="#3d3d3d" stroke-width="1.0" fill="none" stroke-linecap="round" stroke-linejoin="round"/><path d="M 349.5 83.2 L 352.3 85.9 L 349.5 88.6" stroke="#777" stroke-width="1.3" fill="none" stroke-linecap="round" stroke-linejoin="round"/><path d="M 494.5 83.2 L 497.3 85.9 L 494.5 88.6" stroke="#777" stroke-width="1.3" fill="none" stroke-linecap="round" stroke-linejoin="round"/></svg>
<svg style="position:absolute;left:0;top:0;" width="1662" height="786" viewBox="0 0 1662 786"><g transform="translate(1504,340)"><path d="M 18.75 15.2 V 9.4 Q 18.75 7.75 17.1 7.75 H 7 Q 5.35 7.75 5.35 9.4 V 16.2 Q 5.35 17.85 7 17.85 H 12.3 M 5.8 8.7 L 12 13.2 L 18.3 8.7 M 14.3 18 H 19.2 M 17 15.7 L 19.3 18 L 17 20.3" stroke="#0d4a89" stroke-width="1.5" fill="none" stroke-linecap="round" stroke-linejoin="round"/></g><g transform="translate(1547,340)"><path d="M 11.6 19 H 8.2 Q 6.6 19 6.6 17.4 V 7.6 Q 6.6 6 8.2 6 H 13.3 L 17.2 9.7 V 13.5 M 13.3 6.2 V 8.7 Q 13.3 9.7 14.3 9.7 H 17 M 13.2 17.7 H 18.7 M 16.3 15.4 L 18.8 17.7 L 16.3 20.1" stroke="#0d4a89" stroke-width="1.5" fill="none" stroke-linecap="round" stroke-linejoin="round"/></g><g transform="translate(1589,340)"><path d="M 6.6 13.2 V 7.6 Q 6.6 6 8.2 6 H 13.3 L 17.2 9.7 V 13.2 M 13.3 6.2 V 8.7 Q 13.3 9.7 14.3 9.7 H 17" stroke="#0d4a89" stroke-width="1.5" fill="none" stroke-linecap="round" stroke-linejoin="round"/><text x="5.3" y="19.8" font-family="Liberation Sans" font-weight="bold" font-size="7.6" fill="#0d4a89" stroke="#0d4a89" stroke-width="0.55" textLength="14.2" lengthAdjust="spacingAndGlyphs">XML</text></g><g transform="translate(1504,393.2)"><path d="M 5.4 10.6 V 17.6 Q 5.4 19 6.8 19 H 17.5 Q 18.9 19 18.9 17.6 V 10.6 L 13.1 6.8 Q 12.15 6.2 11.2 6.8 Z M 5.9 11 L 12.15 14.8 L 18.4 11 M 6 18.4 L 9.9 14 M 18.3 18.4 L 14.4 14" stroke="#0d4a89" stroke-width="1.5" fill="none" stroke-linecap="round" stroke-linejoin="round"/></g><g transform="translate(1547,392)"><path d="M 11.6 19 H 8.2 Q 6.6 19 6.6 17.4 V 7.6 Q 6.6 6 8.2 6 H 13.3 L 17.2 9.7 V 13.5 M 13.3 6.2 V 8.7 Q 13.3 9.7 14.3 9.7 H 17 M 13.2 17.7 H 18.7 M 16.3 15.4 L 18.8 17.7 L 16.3 20.1" stroke="#0d4a89" stroke-width="1.5" fill="none" stroke-linecap="round" stroke-linejoin="round"/></g><g transform="translate(1589,392)"><path d="M 6.6 13.2 V 7.6 Q 6.6 6 8.2 6 H 13.3 L 17.2 9.7 V 13.2 M 13.3 6.2 V 8.7 Q 13.3 9.7 14.3 9.7 H 17" stroke="#0d4a89" stroke-width="1.5" fill="none" stroke-linecap="round" stroke-linejoin="round"/><text x="5.3" y="19.8" font-family="Liberation Sans" font-weight="bold" font-size="7.6" fill="#0d4a89" stroke="#0d4a89" stroke-width="0.55" textLength="14.2" lengthAdjust="spacingAndGlyphs">XML</text></g><g transform="translate(1504,445.2)"><path d="M 5.4 10.6 V 17.6 Q 5.4 19 6.8 19 H 17.5 Q 18.9 19 18.9 17.6 V 10.6 L 13.1 6.8 Q 12.15 6.2 11.2 6.8 Z M 5.9 11 L 12.15 14.8 L 18.4 11 M 6 18.4 L 9.9 14 M 18.3 18.4 L 14.4 14" stroke="#0d4a89" stroke-width="1.5" fill="none" stroke-linecap="round" stroke-linejoin="round"/></g><g transform="translate(1547,444)"><path d="M 11.6 19 H 8.2 Q 6.6 19 6.6 17.4 V 7.6 Q 6.6 6 8.2 6 H 13.3 L 17.2 9.7 V 13.5 M 13.3 6.2 V 8.7 Q 13.3 9.7 14.3 9.7 H 17 M 13.2 17.7 H 18.7 M 16.3 15.4 L 18.8 17.7 L 16.3 20.1" stroke="#0d4a89" stroke-width="1.5" fill="none" stroke-linecap="round" stroke-linejoin="round"/></g><g transform="translate(1589,444)"><path d="M 6.6 13.2 V 7.6 Q 6.6 6 8.2 6 H 13.3 L 17.2 9.7 V 13.2 M 13.3 6.2 V 8.7 Q 13.3 9.7 14.3 9.7 H 17" stroke="#0d4a89" stroke-width="1.5" fill="none" stroke-linecap="round" stroke-linejoin="round"/><text x="5.3" y="19.8" font-family="Liberation Sans" font-weight="bold" font-size="7.6" fill="#0d4a89" stroke="#0d4a89" stroke-width="0.55" textLength="14.2" lengthAdjust="spacingAndGlyphs">XML</text></g><g transform="translate(1504,497.2)"><path d="M 5.4 10.6 V 17.6 Q 5.4 19 6.8 19 H 17.5 Q 18.9 19 18.9 17.6 V 10.6 L 13.1 6.8 Q 12.15 6.2 11.2 6.8 Z M 5.9 11 L 12.15 14.8 L 18.4 11 M 6 18.4 L 9.9 14 M 18.3 18.4 L 14.4 14" stroke="#0d4a89" stroke-width="1.5" fill="none" stroke-linecap="round" stroke-linejoin="round"/></g><g transform="translate(1547,496)"><path d="M 11.6 19 H 8.2 Q 6.6 19 6.6 17.4 V 7.6 Q 6.6 6 8.2 6 H 13.3 L 17.2 9.7 V 13.5 M 13.3 6.2 V 8.7 Q 13.3 9.7 14.3 9.7 H 17 M 13.2 17.7 H 18.7 M 16.3 15.4 L 18.8 17.7 L 16.3 20.1" stroke="#0d4a89" stroke-width="1.5" fill="none" stroke-linecap="round" stroke-linejoin="round"/></g><g transform="translate(1589,496)"><path d="M 6.6 13.2 V 7.6 Q 6.6 6 8.2 6 H 13.3 L 17.2 9.7 V 13.2 M 13.3 6.2 V 8.7 Q 13.3 9.7 14.3 9.7 H 17" stroke="#0d4a89" stroke-width="1.5" fill="none" stroke-linecap="round" stroke-linejoin="round"/><text x="5.3" y="19.8" font-family="Liberation Sans" font-weight="bold" font-size="7.6" fill="#0d4a89" stroke="#0d4a89" stroke-width="0.55" textLength="14.2" lengthAdjust="spacingAndGlyphs">XML</text></g><g transform="translate(1504,549.2)"><path d="M 5.4 10.6 V 17.6 Q 5.4 19 6.8 19 H 17.5 Q 18.9 19 18.9 17.6 V 10.6 L 13.1 6.8 Q 12.15 6.2 11.2 6.8 Z M 5.9 11 L 12.15 14.8 L 18.4 11 M 6 18.4 L 9.9 14 M 18.3 18.4 L 14.4 14" stroke="#0d4a89" stroke-width="1.5" fill="none" stroke-linecap="round" stroke-linejoin="round"/></g><g transform="translate(1547,548)"><path d="M 11.6 19 H 8.2 Q 6.6 19 6.6 17.4 V 7.6 Q 6.6 6 8.2 6 H 13.3 L 17.2 9.7 V 13.5 M 13.3 6.2 V 8.7 Q 13.3 9.7 14.3 9.7 H 17 M 13.2 17.7 H 18.7 M 16.3 15.4 L 18.8 17.7 L 16.3 20.1" stroke="#0d4a89" stroke-width="1.5" fill="none" stroke-linecap="round" stroke-linejoin="round"/></g><g transform="translate(1589,548)"><path d="M 6.6 13.2 V 7.6 Q 6.6 6 8.2 6 H 13.3 L 17.2 9.7 V 13.2 M 13.3 6.2 V 8.7 Q 13.3 9.7 14.3 9.7 H 17" stroke="#0d4a89" stroke-width="1.5" fill="none" stroke-linecap="round" stroke-linejoin="round"/><text x="5.3" y="19.8" font-family="Liberation Sans" font-weight="bold" font-size="7.6" fill="#0d4a89" stroke="#0d4a89" stroke-width="0.55" textLength="14.2" lengthAdjust="spacingAndGlyphs">XML</text></g><g transform="translate(1504,601.2)"><path d="M 5.4 10.6 V 17.6 Q 5.4 19 6.8 19 H 17.5 Q 18.9 19 18.9 17.6 V 10.6 L 13.1 6.8 Q 12.15 6.2 11.2 6.8 Z M 5.9 11 L 12.15 14.8 L 18.4 11 M 6 18.4 L 9.9 14 M 18.3 18.4 L 14.4 14" stroke="#0d4a89" stroke-width="1.5" fill="none" stroke-linecap="round" stroke-linejoin="round"/></g><g transform="translate(1547,600)"><path d="M 11.6 19 H 8.2 Q 6.6 19 6.6 17.4 V 7.6 Q 6.6 6 8.2 6 H 13.3 L 17.2 9.7 V 13.5 M 13.3 6.2 V 8.7 Q 13.3 9.7 14.3 9.7 H 17 M 13.2 17.7 H 18.7 M 16.3 15.4 L 18.8 17.7 L 16.3 20.1" stroke="#0d4a89" stroke-width="1.5" fill="none" stroke-linecap="round" stroke-linejoin="round"/></g><g transform="translate(1589,600)"><path d="M 6.6 13.2 V 7.6 Q 6.6 6 8.2 6 H 13.3 L 17.2 9.7 V 13.2 M 13.3 6.2 V 8.7 Q 13.3 9.7 14.3 9.7 H 17" stroke="#0d4a89" stroke-width="1.5" fill="none" stroke-linecap="round" stroke-linejoin="round"/><text x="5.3" y="19.8" font-family="Liberation Sans" font-weight="bold" font-size="7.6" fill="#0d4a89" stroke="#0d4a89" stroke-width="0.55" textLength="14.2" lengthAdjust="spacingAndGlyphs">XML</text></g><g transform="translate(1504,653.2)"><path d="M 5.4 10.6 V 17.6 Q 5.4 19 6.8 19 H 17.5 Q 18.9 19 18.9 17.6 V 10.6 L 13.1 6.8 Q 12.15 6.2 11.2 6.8 Z M 5.9 11 L 12.15 14.8 L 18.4 11 M 6 18.4 L 9.9 14 M 18.3 18.4 L 14.4 14" stroke="#0d4a89" stroke-width="1.5" fill="none" stroke-linecap="round" stroke-linejoin="round"/></g><g transform="translate(1547,652)"><path d="M 11.6 19 H 8.2 Q 6.6 19 6.6 17.4 V 7.6 Q 6.6 6 8.2 6 H 13.3 L 17.2 9.7 V 13.5 M 13.3 6.2 V 8.7 Q 13.3 9.7 14.3 9.7 H 17 M 13.2 17.7 H 18.7 M 16.3 15.4 L 18.8 17.7 L 16.3 20.1" stroke="#0d4a89" stroke-width="1.5" fill="none" stroke-linecap="round" stroke-linejoin="round"/></g><g transform="translate(1589,652)"><path d="M 6.6 13.2 V 7.6 Q 6.6 6 8.2 6 H 13.3 L 17.2 9.7 V 13.2 M 13.3 6.2 V 8.7 Q 13.3 9.7 14.3 9.7 H 17" stroke="#0d4a89" stroke-width="1.5" fill="none" stroke-linecap="round" stroke-linejoin="round"/><text x="5.3" y="19.8" font-family="Liberation Sans" font-weight="bold" font-size="7.6" fill="#0d4a89" stroke="#0d4a89" stroke-width="0.55" textLength="14.2" lengthAdjust="spacingAndGlyphs">XML</text></g></svg>
<svg style="position:absolute;left:0;top:0;" width="1662" height="786" viewBox="0 0 1662 786"><defs><filter id="sh" x="-50%" y="-50%" width="200%" height="200%"><feDropShadow dx="1.5" dy="2" stdDeviation="2.2" flood-color="#000" flood-opacity="0.5"/></filter></defs><g filter="url(#sh)"><rect x="1543" y="332.6" width="33.6" height="38.5" rx="12" stroke="#8a00ff" stroke-width="3" fill="none"/><path d="M 1441 424.5 L 1524 370.5" stroke="#8a00ff" stroke-width="3.2" stroke-linecap="round"/><path d="M 1540.5 360.8 L 1517.5 366.2 L 1525.8 379.3 Z" fill="#8a00ff" stroke="#8a00ff" stroke-width="1" stroke-linejoin="round"/></g></svg>
</body></html>
